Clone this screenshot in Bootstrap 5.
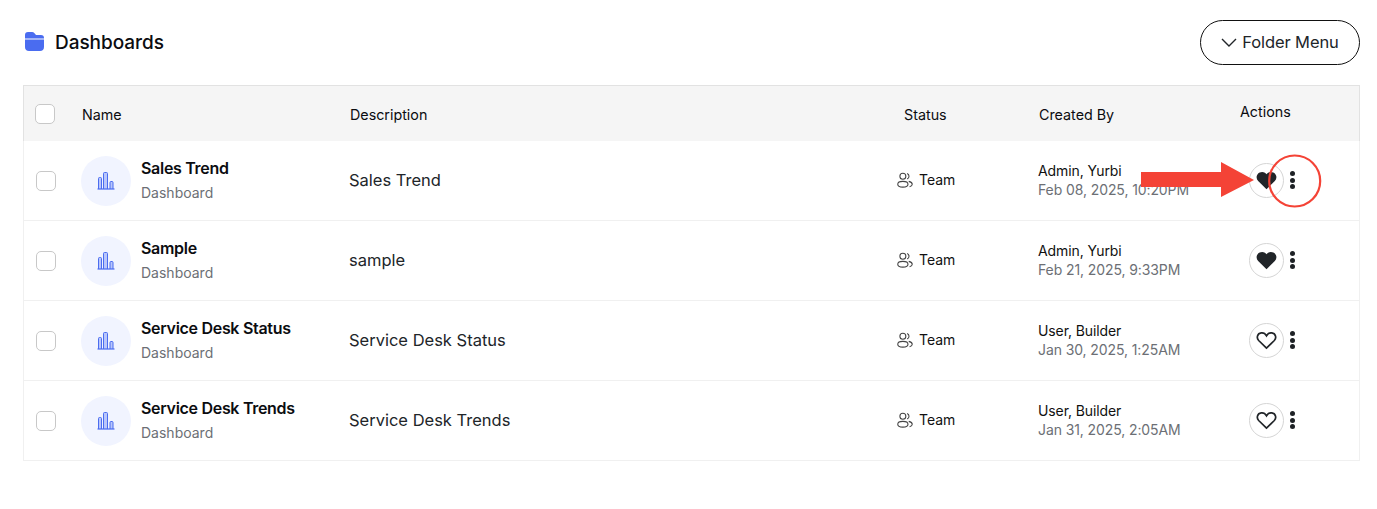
<!DOCTYPE html>
<html lang="en">
<head>
<meta charset="utf-8">
<title>Dashboards</title>
<link href="https://cdn.jsdelivr.net/npm/bootstrap@5.3.0/dist/css/bootstrap.min.css" rel="stylesheet">
<style>
body{font-family:Inter,"Liberation Sans",sans-serif;background:#fff;color:#0b0c10;font-size:14px;}
.page-wrap{padding:20px 17px 0 23px;position:relative;}
.title-bar{height:45px;margin-bottom:20px;}
.folder-glyph{margin-left:2px;margin-top:-2px;flex:none;}
.page-title{font-size:19px;font-weight:500;letter-spacing:-.05px;margin:2px 0 0 11px;color:#0b0c10;}
.folder-btn{width:160px;height:45px;border:1px solid #111;border-radius:23px;font-size:16.5px;color:#212529;padding:0;background:#fff;letter-spacing:-.1px;gap:5px;}
.dash-table{width:1337px;table-layout:fixed;border-collapse:separate;border-spacing:0;margin:0;}
.dash-table th{background:#f5f5f5;font-weight:400;font-size:14.3px;height:56px;padding:3px 0 0;vertical-align:middle;border:0;border-top:1px solid #e2e2e2;color:#0b0c10;}
.dash-table th:first-child{border-left:1px solid #e2e2e2;}
.dash-table th:last-child{border-right:1px solid #e2e2e2;}
.dash-table td{height:80px;padding:0;vertical-align:middle;border:0;border-top:1px solid #f0f0f0;}
.dash-table td:first-child{border-left:1px solid #f0f0f0;}
.dash-table td:last-child{border-right:1px solid #f0f0f0;}
.dash-table tbody tr:first-child td{border-top:0;height:79px;}
.dash-table tbody tr:last-child td{border-bottom:1px solid #f0f0f0;height:81px;}
.c-check{width:59px;}.c-name{width:268px;}.c-desc{width:547px;}.c-status{width:143px;}.c-created{width:198px;}
.box{width:20px;height:20px;border:1px solid #c8c8c8;border-radius:5px;background:#fff;margin:0;appearance:none;display:block;}
.th-box{margin-left:11px;margin-top:-3px;}
.td-box{margin-left:12px;}
.th-status{padding-left:7px!important;}
.th-created span{margin-left:-1px;display:block;}
.dash-table th.th-actions{padding:0 0 3px 2px;}
.orb{width:50px;height:50px;border-radius:50%;background:#f1f4ff;flex:none;margin-left:-1px;}
.name-text{margin-left:10px;padding-top:2px;}
.row-title{font-size:16px;font-weight:600;letter-spacing:-.3px;color:#0b0c10;line-height:20px;margin-top:-3px;}
.row-sub{font-size:14px;color:#6c6f75;line-height:20px;margin-top:5px;}
.desc-cell{font-size:16.5px;color:#212529;margin-left:-1px;padding-bottom:1px;}
.team{font-size:14px;color:#111;gap:6px;padding-bottom:2px;}
.author{font-size:14px;color:#111;line-height:19px;margin-left:-2px;letter-spacing:-.1px;padding-bottom:2px;}
.stamp{color:#6c6f75;}
.action-set{padding-bottom:1px;}
.heart-btn{width:35px;height:35px;border:1px solid #d5d5d5;border-radius:50%;background:#fff;padding:0;flex:none;margin-left:11px;}
.kebab{width:5px;margin-left:6px;gap:1.500px;}
.kebab i{display:block;width:5px;height:5px;border-radius:50%;background:#1d2125;}
.marker{position:absolute;pointer-events:none;}
</style>
</head>
<body>
<div class="page-wrap">
  <div class="d-flex align-items-center justify-content-between title-bar">
    <div class="d-flex align-items-center">
      <svg class="folder-glyph" width="19" height="19" viewBox="0 0 19 19"><path fill="#4a6cf0" d="M0 6V3C0 1 1 0 3 0h4c1 0 1.800.5 2.500 1.200L11 3h5c2 0 3 1 3 3v.5H0z"/><path fill="#4a6cf0" d="M0 7.500h19V15c0 2.500-1.500 4-4 4H4c-2.500 0-4-1.500-4-4z"/></svg>
      <h1 class="page-title">Dashboards</h1>
    </div>
    <button class="btn folder-btn d-flex align-items-center justify-content-center" type="button">
      <svg width="16" height="9" viewBox="0 0 16 9" fill="none" stroke="#212529" stroke-width="1.400"><path d="M1 1l7 7 7-7"/></svg>
      <span>Folder Menu</span>
    </button>
  </div>

  <table class="table dash-table">
    <thead>
      <tr>
        <th class="c-check"><input class="box th-box" type="checkbox" aria-label="Select all"></th>
        <th class="c-name">Name</th>
        <th class="c-desc">Description</th>
        <th class="c-status th-status">Status</th>
        <th class="c-created"><span class="th-created"><span>Created By</span></span></th>
        <th class="th-actions">Actions</th>
      </tr>
    </thead>
    <tbody>
      <tr>
        <td><input class="box td-box" type="checkbox" aria-label="Select"></td>
        <td><div class="d-flex align-items-center"><div class="orb d-flex align-items-center justify-content-center"><svg width="18" height="18" viewBox="0 0 18 18" fill="#b9c6fb" stroke="#4a6cf0" stroke-width="1"><path d="M1.500 17V6.500q0-1 1-1h1q1 0 1 1V17M6.500 17V1.500q0-1 1-1h2q1 0 1 1V17M13 17V10.500q0-1 1-1h1q1 0 1 1V17"/><path d="M.5 17h17" fill="none" stroke-width="1.200"/></svg></div><div class="name-text"><div class="row-title">Sales Trend</div><div class="row-sub">Dashboard</div></div></div></td>
        <td><div class="desc-cell">Sales Trend</div></td>
        <td><div class="team d-flex align-items-center"><svg width="16" height="16" viewBox="0 0 15 15" fill="none" stroke="#444" stroke-width="1"><circle cx="5.500" cy="4" r="2.800"/><ellipse cx="5.500" cy="11.500" rx="4.800" ry="2.700"/><path d="M9.500 1.400a2.800 2.800 0 0 1 0 5.200M11 8.800c2 .5 3.300 1.500 3.300 2.700 0 1-1 1.900-2.500 2.400"/></svg><span>Team</span></div></td>
        <td><div class="author">Admin, Yurbi<br><span class="stamp">Feb 08, 2025, 10:20PM</span></div></td>
        <td><div class="action-set d-flex align-items-center"><button class="heart-btn d-flex align-items-center justify-content-center" type="button" aria-label="Favourite"><svg width="21" height="19" viewBox="0 0 22 19"><path fill="#212529" stroke="#212529" stroke-width="1.500" d="M11 17.500L2.800 9.500C.2 6.800 1.300 2 5.500 1.500c2.300-.3 4.300.9 5.500 3 1.200-2.100 3.200-3.300 5.500-3 4.200.5 5.300 5.300 2.700 8z"/></svg></button><div class="kebab d-flex flex-column"><i></i><i></i><i></i></div></div></td>
      </tr>
      <tr>
        <td><input class="box td-box" type="checkbox" aria-label="Select"></td>
        <td><div class="d-flex align-items-center"><div class="orb d-flex align-items-center justify-content-center"><svg width="18" height="18" viewBox="0 0 18 18" fill="#b9c6fb" stroke="#4a6cf0" stroke-width="1"><path d="M1.500 17V6.500q0-1 1-1h1q1 0 1 1V17M6.500 17V1.500q0-1 1-1h2q1 0 1 1V17M13 17V10.500q0-1 1-1h1q1 0 1 1V17"/><path d="M.5 17h17" fill="none" stroke-width="1.200"/></svg></div><div class="name-text"><div class="row-title">Sample</div><div class="row-sub">Dashboard</div></div></div></td>
        <td><div class="desc-cell">sample</div></td>
        <td><div class="team d-flex align-items-center"><svg width="16" height="16" viewBox="0 0 15 15" fill="none" stroke="#444" stroke-width="1"><circle cx="5.500" cy="4" r="2.800"/><ellipse cx="5.500" cy="11.500" rx="4.800" ry="2.700"/><path d="M9.500 1.400a2.800 2.800 0 0 1 0 5.200M11 8.800c2 .5 3.300 1.500 3.300 2.700 0 1-1 1.900-2.500 2.400"/></svg><span>Team</span></div></td>
        <td><div class="author">Admin, Yurbi<br><span class="stamp">Feb 21, 2025, 9:33PM</span></div></td>
        <td><div class="action-set d-flex align-items-center"><button class="heart-btn d-flex align-items-center justify-content-center" type="button" aria-label="Favourite"><svg width="21" height="19" viewBox="0 0 22 19"><path fill="#212529" stroke="#212529" stroke-width="1.500" d="M11 17.500L2.800 9.500C.2 6.800 1.300 2 5.500 1.500c2.300-.3 4.300.9 5.500 3 1.200-2.100 3.200-3.300 5.500-3 4.200.5 5.300 5.300 2.700 8z"/></svg></button><div class="kebab d-flex flex-column"><i></i><i></i><i></i></div></div></td>
      </tr>
      <tr>
        <td><input class="box td-box" type="checkbox" aria-label="Select"></td>
        <td><div class="d-flex align-items-center"><div class="orb d-flex align-items-center justify-content-center"><svg width="18" height="18" viewBox="0 0 18 18" fill="#b9c6fb" stroke="#4a6cf0" stroke-width="1"><path d="M1.500 17V6.500q0-1 1-1h1q1 0 1 1V17M6.500 17V1.500q0-1 1-1h2q1 0 1 1V17M13 17V10.500q0-1 1-1h1q1 0 1 1V17"/><path d="M.5 17h17" fill="none" stroke-width="1.200"/></svg></div><div class="name-text"><div class="row-title">Service Desk Status</div><div class="row-sub">Dashboard</div></div></div></td>
        <td><div class="desc-cell">Service Desk Status</div></td>
        <td><div class="team d-flex align-items-center"><svg width="16" height="16" viewBox="0 0 15 15" fill="none" stroke="#444" stroke-width="1"><circle cx="5.500" cy="4" r="2.800"/><ellipse cx="5.500" cy="11.500" rx="4.800" ry="2.700"/><path d="M9.500 1.400a2.800 2.800 0 0 1 0 5.200M11 8.800c2 .5 3.300 1.500 3.300 2.700 0 1-1 1.900-2.500 2.400"/></svg><span>Team</span></div></td>
        <td><div class="author">User, Builder<br><span class="stamp">Jan 30, 2025, 1:25AM</span></div></td>
        <td><div class="action-set d-flex align-items-center"><button class="heart-btn d-flex align-items-center justify-content-center" type="button" aria-label="Favourite"><svg width="21" height="19" viewBox="0 0 22 19"><path fill="none" stroke="#212529" stroke-width="1.800" d="M11 17.500L2.800 9.500C.2 6.800 1.300 2 5.500 1.500c2.300-.3 4.300.9 5.500 3 1.200-2.100 3.200-3.300 5.500-3 4.200.5 5.300 5.300 2.700 8z"/></svg></button><div class="kebab d-flex flex-column"><i></i><i></i><i></i></div></div></td>
      </tr>
      <tr>
        <td><input class="box td-box" type="checkbox" aria-label="Select"></td>
        <td><div class="d-flex align-items-center"><div class="orb d-flex align-items-center justify-content-center"><svg width="18" height="18" viewBox="0 0 18 18" fill="#b9c6fb" stroke="#4a6cf0" stroke-width="1"><path d="M1.500 17V6.500q0-1 1-1h1q1 0 1 1V17M6.500 17V1.500q0-1 1-1h2q1 0 1 1V17M13 17V10.500q0-1 1-1h1q1 0 1 1V17"/><path d="M.5 17h17" fill="none" stroke-width="1.200"/></svg></div><div class="name-text"><div class="row-title">Service Desk Trends</div><div class="row-sub">Dashboard</div></div></div></td>
        <td><div class="desc-cell">Service Desk Trends</div></td>
        <td><div class="team d-flex align-items-center"><svg width="16" height="16" viewBox="0 0 15 15" fill="none" stroke="#444" stroke-width="1"><circle cx="5.500" cy="4" r="2.800"/><ellipse cx="5.500" cy="11.500" rx="4.800" ry="2.700"/><path d="M9.500 1.400a2.800 2.800 0 0 1 0 5.200M11 8.800c2 .5 3.300 1.500 3.300 2.700 0 1-1 1.900-2.500 2.400"/></svg><span>Team</span></div></td>
        <td><div class="author">User, Builder<br><span class="stamp">Jan 31, 2025, 2:05AM</span></div></td>
        <td><div class="action-set d-flex align-items-center"><button class="heart-btn d-flex align-items-center justify-content-center" type="button" aria-label="Favourite"><svg width="21" height="19" viewBox="0 0 22 19"><path fill="none" stroke="#212529" stroke-width="1.800" d="M11 17.500L2.800 9.500C.2 6.800 1.300 2 5.500 1.500c2.300-.3 4.300.9 5.500 3 1.200-2.100 3.200-3.300 5.500-3 4.200.5 5.300 5.300 2.700 8z"/></svg></button><div class="kebab d-flex flex-column"><i></i><i></i><i></i></div></div></td>
      </tr>
    </tbody>
  </table>

  <svg class="marker" style="left:1140px;top:152px" width="186" height="58" viewBox="0 0 186 58" fill="none" aria-hidden="true">
    <path fill="#f44336" d="M1 20h80V10l33 18-33 17V35H1z"/>
    <circle cx="154.700" cy="29" r="25.500" stroke="#f44336" stroke-width="2.200"/>
  </svg>
</div>
<script src="https://cdn.jsdelivr.net/npm/bootstrap@5.3.0/dist/js/bootstrap.bundle.min.js"></script>
</body>
</html>
